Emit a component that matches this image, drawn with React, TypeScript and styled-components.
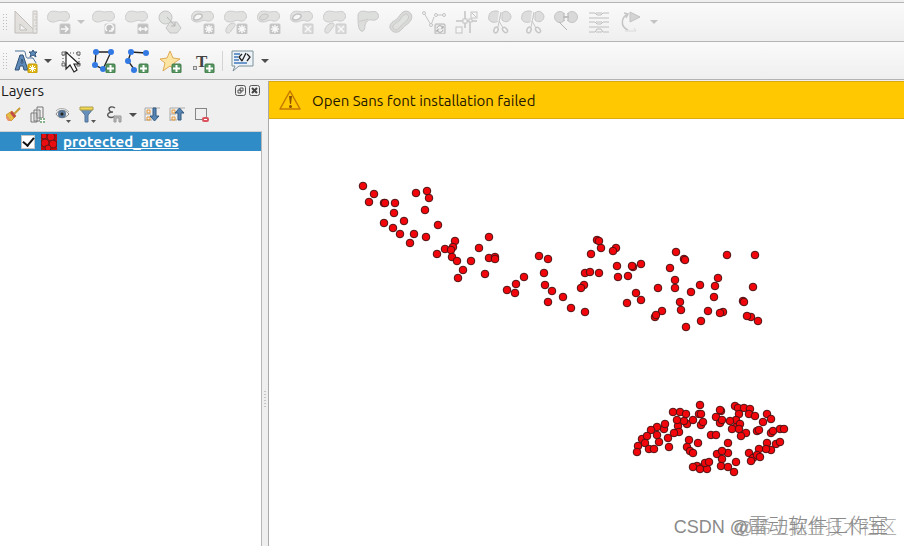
import React, { useState } from "react";
import styled, { createGlobalStyle, css } from "styled-components";

const GlobalStyle = createGlobalStyle`
  * { box-sizing: border-box; }
  body {
    margin: 0;
    background: #efefef;
    color: #1a1a1a;
    font-family: Ubuntu, "Noto Sans", "Open Sans", sans-serif;
    font-size: 15px;
  }
  button { font: inherit; color: inherit; }
`;

const Window = styled.div`
  display: flex;
  flex-direction: column;
  height: 100vh;
  padding-top: 2px;
  overflow: hidden;
`;

const Toolbar = styled.div`
  display: flex;
  align-items: center;
  flex: none;
  height: 39px;
  border-top: 1px solid #b4b4b4;
  background: linear-gradient(#fafafa, #efefef);
  &:nth-of-type(2) { border-bottom: 1px solid #b4b4b4; }
`;

const Handle = styled.span`
  flex: none;
  width: 5px;
  height: 18px;
  margin: 0 2px;
  background: radial-gradient(circle, #bdbdbd 0 0.5px, transparent 1px) 0 0 / 3px 3px;
`;

const ToolButton = styled.button`
  display: flex;
  align-items: center;
  justify-content: center;
  flex: none;
  width: 33px;
  height: 34px;
  padding: 0;
  border: 0;
  background: none;
  &:disabled { opacity: 0.85; }
`;

const Split = styled.div`
  display: flex;
  flex: none;
  align-items: center;
`;

const CaretButton = styled.button<{ $faded?: boolean }>`
  flex: none;
  display: flex;
  justify-content: center;
  width: 12px;
  height: 20px;
  padding: 8px 0 0;
  border: 0;
  background: none;
  &::before {
    content: "";
    border: 4px solid transparent;
    border-bottom: 0;
    border-top-color: ${(p) => (p.$faded ? "#c4c4c4" : "#4d4d4d")};
  }
`;

const Divider = styled.span`
  width: 1px;
  height: 20px;
  margin: 0 3px;
  background: #d4d4d4;
`;

const Workspace = styled.div`
  display: grid;
  grid-template-columns: 262px 6px minmax(0, 1fr);
  flex: 1;
  min-height: 0;
`;

const Panel = styled.aside`
  display: flex;
  flex-direction: column;
  min-height: 0;
`;

const PanelHeader = styled.header`
  display: flex;
  align-items: center;
  height: 22px;
  padding: 0 1px;
  gap: 2px;
`;

const PanelTitle = styled.h2`
  flex: 1;
  margin: 0;
  font-size: 15px;
  line-height: 20px;
  font-weight: 400;
`;

const SmallButton = styled.button`
  display: flex;
  width: 12px;
  height: 12px;
  padding: 0;
  border: 0;
  background: none;
`;

const PanelTools = styled.div`
  display: flex;
  align-items: center;
  height: 29px;
  padding-bottom: 3px;
`;

const PanelTool = styled.button<{ $wide?: boolean }>`
  display: flex;
  align-items: center;
  justify-content: center;
  flex: none;
  width: ${(p) => (p.$wide ? "27px" : "25px")};
  height: 26px;
  padding: 0;
  border: 0;
  background: none;
`;

const Tree = styled.ul`
  flex: 1;
  margin: 0;
  padding: 0;
  list-style: none;
  background: #fff;
  border-right: 1px solid #b6b6b6;
  border-top: 1px solid #d0d0d0;
`;

const LayerRow = styled.li`
  display: flex;
  align-items: center;
  height: 19px;
  padding-left: 21px;
  background: #308cc6;
`;

const LayerLabel = styled.label`
  display: flex;
  align-items: center;
  gap: 6px;
  color: #fff;
  font-size: 15px;
  line-height: 19px;
  font-weight: 700;
  text-decoration: underline;
`;

const checkMark = css`
  &:checked::after {
    content: "";
    width: 5px;
    height: 9px;
    margin-top: -2px;
    border: solid #111;
    border-width: 0 2px 2px 0;
    transform: rotate(40deg);
  }
`;

const Check = styled.input`
  appearance: none;
  display: flex;
  align-items: center;
  justify-content: center;
  width: 14px;
  height: 14px;
  margin: 0;
  border: 1px solid #c4c4c4;
  background: #fff;
  ${checkMark}
`;

const Splitter = styled.div`
  display: flex;
  align-items: flex-start;
  justify-content: center;
  padding-top: 311px;
  background: #efefef;
`;

const Grip = styled.span`
  width: 2px;
  height: 18px;
  background: repeating-linear-gradient(#c4c4c4 0 1px, transparent 1px 3px);
`;

const MapView = styled.main`
  position: relative;
  display: flex;
  flex-direction: column;
  min-width: 0;
  margin-top: 1px;
  border-left: 1px solid #aaa;
  background: #fff;
  overflow: hidden;
`;

const MessageBar = styled.div`
  display: flex;
  align-items: center;
  flex: none;
  gap: 10px;
  height: 38px;
  padding: 0 9px;
  border: 1px solid #dcaa10;
  border-left: 0;
  border-right: 0;
  background: #ffc800;
  color: #1e1600;
`;

const Canvas = styled.svg`
  flex: none;
  display: block;
`;

const Watermark = styled.div<{ $front?: boolean }>`
  position: absolute;
  right: ${(p) => (p.$front ? "16px" : "7px")};
  bottom: ${(p) => (p.$front ? "6px" : "5px")};
  color: ${(p) => (p.$front ? "#8a8a8a" : "#a2a2a2")};
  font-family: "Liberation Sans", "Noto Sans CJK SC", sans-serif;
  font-size: ${(p) => (p.$front ? "20px" : "18px")};
  font-weight: 300;
  line-height: 26px;
  white-space: nowrap;
`;

const Latin = styled.span`
  font-size: 18px;
`;

const Svg = ({ size = 24, children }: { size?: number; children: React.ReactNode }) => (
  <svg width={size} height={size} viewBox={`0 0 ${size} ${size}`} fill="none" aria-hidden="true">
    {children}
  </svg>
);

const BLOB = "M1 5C2 0 8 1 12 2C16 2 20 0 22 4C24 8 20 12 16 11C12 9 10 12 6 12C1 12 -1 8 1 5Z";
const TAIL = "M2 22C1 18 5 13 10 13C13 15 9 18 7 21C6 23 3 24 2 22Z";
const RING = "M3 7C4 4 9 3 11 5C12 8 8 10 5 10C3 10 2 9 3 7Z";

const glyphs: Record<string, React.ReactNode> = {
  arrow: <path d="M14 19H21M18 16L21 19L18 22" />,
  rotate: <path d="M15 21A4 4 0 1 1 20 21M20 18V21H17" />,
  both: <path d="M14 19H22M16 17L14 19L16 21M20 17L22 19L20 21" />,
  star: <path d="M18 15V23M14 19H22M15 16L21 22M21 16L15 22" />,
  cross: <path d="M15 16L21 22M21 16L15 22" />,
};

const GreyBadge = ({ glyph, light }: { glyph: string; light?: boolean }) => (
  <>
    <rect x="13" y="14" width="10" height="10" rx="1" fill={light ? "#d5d5d5" : "#b8b8b8"} stroke="#c5c5c5" />
    <g stroke="#fafafa" strokeWidth="1.5">{glyphs[glyph]}</g>
  </>
);

const Feature = ({ glyph, tail, ring, hollow, light }: {
  glyph: string; tail?: boolean; ring?: boolean; hollow?: boolean; light?: boolean;
}) => (
  <Svg>
    <g fill="#dedfdd" stroke="#c4c4c4">
      <path d={BLOB} />
      {tail && <path d={TAIL} />}
      {ring && <path d={RING} fill={hollow ? "#f8f8f8" : "#d5d7d3"} stroke="#b9b9b9" strokeWidth={hollow ? 1.5 : 1} />}
    </g>
    <GreyBadge glyph={glyph} light={light} />
  </Svg>
);

const Scissors = () => (
  <Svg>
    <g stroke="#bfbfbf">
      <path d="M1 6C1 2 5 1 8 1C12 1 13 4 12 8C11 12 7 13 4 12C1 11 0 9 1 6Z" fill="#d9d9d9" />
      <path d="M14 3C18 -1 23 3 23 7C22 12 17 13 14 10Z" fill="#d9d9d9" />
      <path d="M12 1L10 17M12 11L15 18" stroke="#f5f5f5" strokeWidth="2" />
      <path d="M13 2L10 17M11 11L15 18" />
      <ellipse cx="8" cy="20" rx="2" ry="3" transform="rotate(20 8 20)" strokeWidth="1.5" />
      <ellipse cx="17" cy="20" rx="2" ry="3" transform="rotate(-40 17 20)" strokeWidth="1.5" />
    </g>
  </Svg>
);

const advancedTools: { name: string; icon: React.ReactNode; menu?: boolean }[] = [
  {
    name: "Enable advanced digitizing tools",
    icon: (
      <Svg>
        <path d="M1 1V23H23ZM6 14L13 20H6Z" fill="#e0ddd9" stroke="#b9b5b1" fillRule="evenodd" />
        <path d="M19 1H23V23H19Z" fill="#e8e6e3" stroke="#c0bdba" />
        <path d="M20 4H23M21 7H23M20 10H23M21 13H23M20 16H23M21 19H23" stroke="#c0bdba" />
      </Svg>
    ),
  },
  { name: "Move feature", icon: <Feature glyph="arrow" />, menu: true },
  { name: "Rotate feature", icon: <Feature glyph="rotate" /> },
  { name: "Scale feature", icon: <Feature glyph="both" /> },
  {
    name: "Simplify feature",
    icon: (
      <Svg>
        <g stroke="#bdbdbd" fill="#dcdedb">
          <circle cx="7.5" cy="7.5" r="6.5" />
          <path d="M12 12H19L23 18L19 23H12L8 18Z" />
          <path d="M9 7L17 16M17 12V16H13" stroke="#aaa" />
        </g>
      </Svg>
    ),
  },
  { name: "Add ring", icon: <Feature glyph="star" ring hollow /> },
  { name: "Add part", icon: <Feature glyph="star" tail /> },
  { name: "Fill ring", icon: <Feature glyph="star" ring /> },
  { name: "Delete ring", icon: <Feature glyph="cross" ring hollow light /> },
  { name: "Delete part", icon: <Feature glyph="cross" tail light /> },
  {
    name: "Reshape features",
    icon: (
      <Svg>
        <path d="M2 5C3 0 8 1 12 2C16 2 20 0 22 4C24 8 20 11 16 10C12 9 10 12 9 15C9 19 8 22 5 21C2 19 2 12 2 5Z" fill="#d9dbd8" stroke="#c0c0c0" />
        <path d="M3 12C5 10 9 11 12 9" stroke="#c4c4c4" />
      </Svg>
    ),
  },
  {
    name: "Offset curve",
    icon: (
      <Svg>
        <path d="M14 2C19 -1 25 4 22 10C20 14 16 15 13 19C9 24 3 23 1 18C0 13 5 11 8 9C10 7 11 4 14 2Z" fill="#d4d6d3" stroke="#c0c0c0" />
        <path d="M15 5C18 3 21 6 19 9C17 12 14 13 11 17C8 21 4 20 4 17C4 14 8 13 11 10C12 8 13 6 15 5Z" fill="#dddfdc" stroke="#c4c4c4" />
      </Svg>
    ),
  },
  {
    name: "Reverse line",
    icon: (
      <Svg>
        <g stroke="#bcbcbc" fill="#f7f7f7">
          <path d="M2 3L9 15L12 7" />
          <path d="M13 5H22" />
          <circle cx="2" cy="3" r="1.5" /><circle cx="9" cy="15" r="1.5" />
          <circle cx="14" cy="5" r="1.5" /><circle cx="22" cy="5" r="1.5" />
          <rect x="13" y="14" width="10" height="10" rx="1" fill="#e5e5e5" stroke="#aaa" />
          <path d="M15 18C16 15 20 15 21 18M21 20C20 23 16 23 15 20M21 16V18H19M15 22V20H17" stroke="#999" />
        </g>
      </Svg>
    ),
  },
  {
    name: "Trim or extend feature",
    icon: (
      <Svg>
        <g stroke="#bcbcbc" fill="#f7f7f7">
          <path d="M1 11H22M10 1V18M15 11V23" strokeWidth="1.5" />
          <rect x="16" y="2" width="6" height="6" /><rect x="1" y="17" width="6" height="6" />
          <path d="M17 3L21 7" />
          <rect x="8" y="9" width="4" height="4" /><rect x="14" y="9" width="3" height="3" />
        </g>
      </Svg>
    ),
  },
  { name: "Split features", icon: <Scissors /> },
  { name: "Split parts", icon: <Scissors /> },
  {
    name: "Merge features",
    icon: (
      <Svg>
        <g stroke="#bdbdbd" fill="#d4d4d4">
          <circle cx="6" cy="7" r="5.5" /><circle cx="18" cy="7" r="5.5" />
          <path d="M10 5H14M10 9H14" stroke="#f4f4f4" strokeWidth="2" />
          <path d="M10 3V11M14 3V11M9 7H15" stroke="#aaa" />
          <path d="M5 12L13 20" stroke="#aaa" />
        </g>
      </Svg>
    ),
  },
  {
    name: "Merge attributes",
    icon: (
      <Svg>
        <path d="M2 3H8L10 5H14L16 3H22M2 8H22M2 12H8L10 14H14L16 12H22M2 17H22M2 22H8L10 19H14L16 22H22M9 3H15M9 12H15M9 22H15" stroke="#b6b6b6" />
      </Svg>
    ),
  },
  {
    name: "Rotate point symbols",
    icon: (
      <Svg>
        <path d="M10 2L20 7L10 12Z" fill="#cfcfcf" stroke="#b9b9b9" />
        <path d="M8 20C0 17 1 7 8 4M4 3L8 4L6 8" stroke="#bdbdbd" strokeWidth="1.5" />
        <path d="M5 21H16L14 18" stroke="#d7d7d7" />
      </Svg>
    ),
    menu: true,
  },
];

const PlusBadge = () => (
  <>
    <rect x="14" y="15" width="9" height="9" rx="1" fill="#579561" stroke="#407b4a" />
    <path d="M18.5 16V23M15 19.5H22" stroke="#fff" strokeWidth="2" />
  </>
);

const annotationTools: { name: string; icon: React.ReactNode; menu?: boolean }[] = [
  {
    name: "New annotation layer",
    menu: true,
    icon: (
      <Svg>
        <path d="M1 2H10C12 2 11 8 13 9H19L22 14" stroke="#4d7197" />
        <path d="M19 1L20 3H23L21 5L22 8L19 6L16 8L17 5L15 3H18Z" fill="#5d8cbb" stroke="#34577d" />
        <path d="M1 21L6 6H9L14 21H10L9 17H6L5 21ZM7 14H9L8 10Z" fill="#5d88b8" stroke="#315477" fillRule="evenodd" />
        <rect x="14" y="15" width="9" height="9" rx="1" fill="#e2b912" stroke="#bd960b" />
        <path d="M18.5 16V23M15 19.5H22M16 17L21 22M21 17L16 22" stroke="#fff" />
      </Svg>
    ),
  },
  {
    name: "Modify annotations",
    icon: (
      <Svg>
        <path d="M5 4H19M4 6V15M20 6V15M6 16H18" stroke="#444" strokeDasharray="1 2" />
        <g fill="#eee" stroke="#666"><path d="M3 3H6V6H3ZM18 3H21V6H18ZM3 14H6V17H3ZM18 14H21V17H18Z" /></g>
        <path d="M7 3V20L11 16L15 23L18 21L15 15H20Z" fill="#fff" stroke="#222" strokeWidth="1.2" />
      </Svg>
    ),
  },
  {
    name: "Create polygon annotation",
    icon: (
      <Svg>
        <path d="M4 3H19L11 20L3 16Z" fill="#f4f4f4" stroke="#222" strokeWidth="1.3" />
        <g fill="#3379e4"><circle cx="4" cy="3" r="3" /><circle cx="19" cy="3" r="3" /><circle cx="3" cy="16" r="3" /><circle cx="11" cy="20" r="3" /></g>
        <PlusBadge />
      </Svg>
    ),
  },
  {
    name: "Create line annotation",
    icon: (
      <Svg>
        <path d="M21 4L6 3L3 12L9 20" stroke="#222" strokeWidth="1.3" />
        <g fill="#3379e4"><circle cx="21" cy="4" r="3" /><circle cx="6" cy="3" r="3" /><circle cx="3" cy="12" r="3" /><circle cx="9" cy="21" r="3" /></g>
        <PlusBadge />
      </Svg>
    ),
  },
  {
    name: "Create marker annotation",
    icon: (
      <Svg>
        <path d="M12 2L15 9L22 10L16 14L18 22L12 17L5 22L7 14L2 10L9 9Z" fill="#fce4a2" stroke="#dfaa55" />
        <PlusBadge />
      </Svg>
    ),
  },
  {
    name: "Create text annotation at point",
    icon: (
      <Svg>
        <text x="5" y="18" fontFamily="Liberation Serif, serif" fontWeight="700" fontSize="17" fill="#444">T</text>
        <rect x="2.5" y="17.5" width="3" height="3" fill="#ddd" stroke="#888" />
        <PlusBadge />
      </Svg>
    ),
  },
];

const HtmlNote = () => (
  <Svg>
    <path d="M1 2H22V17H8L2 22L4 17H1Z" fill="#edf3f7" stroke="#7d929c" />
    <path d="M3 5H9M3 8H7M3 11H8M3 14H16" stroke="#6b97cb" strokeWidth="2" />
    <path d="M11 5L8 8L11 12M16 5L19 8L16 12M15 4L11 12" stroke="#222" strokeWidth="1.3" />
  </Svg>
);

const panelTools: { name: string; icon: React.ReactNode; menu?: boolean }[] = [
  {
    name: "Open the layer styling panel",
    icon: (
      <Svg size={18}>
        <path d="M16 2L10 8" stroke="#c79b32" strokeWidth="2" />
        <path d="M8 5L12 10L7 15L2 9Z" fill="#e6bf42" stroke="#c99c37" />
        <path d="M8 5L12 10L10 12L6 7Z" fill="#c14b49" />
        <path d="M2 9L7 15H4L2 12Z" fill="#e9926b" />
      </Svg>
    ),
  },
  {
    name: "Add group",
    icon: (
      <Svg size={18}>
        <path d="M8 1H14V12H8ZM5 4H11V15H5ZM2 7H8V16H2Z" stroke="#777" />
        <path d="M9 3V12M6 6V14" stroke="#bbb" />
        <rect x="11" y="12" width="5" height="5" fill="#87b48c" /><path d="M13.5 12V17M11 14.5H16" stroke="#fff" />
      </Svg>
    ),
  },
  {
    name: "Manage map themes",
    icon: (
      <Svg size={18}>
        <path d="M2 8C5 3 11 3 15 8C11 13 5 13 2 8Z" fill="#eee" stroke="#888" />
        <circle cx="8" cy="8" r="4" fill="#5a7797" /><circle cx="8" cy="8" r="1.5" fill="#222" />
        <path d="M2 5C5 1 12 2 15 6" stroke="#aaa" />
        <path d="M12 14H17L14.5 17Z" fill="#555" />
      </Svg>
    ),
  },
  {
    name: "Filter legend",
    icon: (
      <Svg size={18}>
        <path d="M1 3H14L9 9V16H6V9Z" fill="#668fbb" stroke="#517499" />
        <path d="M1 1H14V4H1Z" fill="#f2d84e" stroke="#ad9d4f" />
        <path d="M12 14H17L14.5 17Z" fill="#555" />
      </Svg>
    ),
  },
  {
    name: "Filter legend by expression",
    menu: true,
    icon: (
      <Svg size={18}>
        <path d="M10 2C7 0 4 1 4 3C4 5 6 6 8 6C4 6 2 8 3 10C4 12 8 12 10 10" stroke="#555" strokeWidth="1.4" />
        <path d="M9 10H16V16H14V12H11V16H9Z" fill="#b9b9b9" stroke="#999" />
      </Svg>
    ),
  },
  {
    name: "Expand all",
    icon: (
      <Svg size={18}>
        <path d="M2 2H17M2 2V15M2 8H8M2 14H9" stroke="#aaa" />
        <path d="M4 4H7V7H4ZM4 11H7V14H4Z" stroke="#e79a37" />
        <path d="M10 2H13V10H16L11.5 15L7 10H10Z" fill="#5685b4" stroke="#335b82" />
      </Svg>
    ),
  },
  {
    name: "Collapse all",
    icon: (
      <Svg size={18}>
        <path d="M2 2H17M2 2V15M2 8H8M2 14H9" stroke="#aaa" />
        <path d="M4 4H7V7H4ZM4 11H7V14H4Z" stroke="#e79a37" />
        <path d="M10 14H13V7H16L11.5 2L7 7H10Z" fill="#5685b4" stroke="#335b82" />
      </Svg>
    ),
  },
  {
    name: "Remove layer",
    icon: (
      <Svg size={18}>
        <rect x="2.5" y="2.5" width="11" height="11" stroke="#858585" />
        <rect x="10" y="12" width="5" height="3" rx="1" fill="#fff" stroke="#dc5360" strokeWidth="2" />
      </Svg>
    ),
  },
];

const points: [number, number][] = [
  [363, 186], [374, 194], [369, 202], [384, 203], [385, 203], [395, 203], [394, 213], [404, 221], [384, 223],
  [393, 228], [400, 234], [414, 234], [410, 243], [426, 237], [438, 225], [425, 210], [429, 198], [427, 191],
  [416, 193], [437, 254], [445, 249], [455, 241], [453, 247], [451, 250], [452, 257], [457, 261], [471, 261],
  [463, 270], [458, 278], [479, 248], [489, 237], [489, 258], [495, 257], [495, 259], [485, 274],
  [539, 256], [548, 259], [544, 273], [524, 277], [516, 284], [507, 290], [515, 293], [545, 285], [552, 291],
  [548, 302], [563, 297], [571, 308], [585, 312], [584, 285], [581, 288], [585, 273], [590, 272], [599, 273],
  [591, 254], [597, 240], [599, 241], [601, 248], [616, 248], [613, 251], [617, 266], [618, 277], [628, 276],
  [633, 267], [632, 266], [641, 264], [636, 293], [627, 303], [641, 300],
  [676, 252], [684, 259], [685, 260], [670, 268], [675, 280], [675, 288], [658, 288], [691, 292], [700, 285],
  [680, 302], [681, 310], [662, 311], [655, 317], [656, 315], [686, 327], [701, 321], [708, 311], [714, 297],
  [715, 286], [718, 278], [727, 255], [755, 255], [753, 287], [743, 301], [744, 302], [723, 312], [720, 313],
  [751, 317], [747, 316], [758, 321],
  [700, 405], [673, 412], [680, 412], [686, 414], [687, 424], [684, 421], [678, 426], [677, 420], [693, 420],
  [679, 432], [674, 433], [699, 414], [701, 414], [701, 425], [703, 422], [664, 429], [665, 424], [657, 427],
  [651, 430], [642, 439], [647, 436], [657, 435], [645, 443], [638, 446], [637, 452], [649, 449], [654, 449],
  [659, 442], [668, 438], [669, 447], [721, 411], [720, 410], [716, 417], [720, 423], [722, 420], [735, 406],
  [738, 408], [744, 408], [750, 409], [739, 414], [749, 414], [755, 416], [736, 420], [730, 421], [736, 427],
  [740, 424], [732, 429], [739, 429], [746, 433], [741, 436], [767, 414], [771, 419], [763, 422], [757, 431],
  [759, 430], [771, 433], [773, 431], [780, 429], [784, 429], [711, 435], [716, 435], [689, 440], [698, 443],
  [687, 447], [690, 451], [693, 453], [728, 443], [717, 454], [728, 453], [722, 451], [722, 459], [721, 466],
  [728, 467], [734, 472], [736, 462], [697, 466], [693, 467], [703, 467], [700, 469], [707, 469], [705, 463],
  [709, 462], [776, 444], [767, 443], [771, 450], [766, 449], [759, 449], [780, 442], [749, 453], [753, 458],
  [751, 461], [757, 455], [760, 457],
];

const toolSets = (tools: typeof advancedTools, faded?: boolean) =>
  tools.map((tool) =>
    tool.menu ? (
      <Split key={tool.name}>
        <ToolButton aria-label={tool.name} disabled={faded}>{tool.icon}</ToolButton>
        <CaretButton $faded={faded} disabled={faded} aria-label={`${tool.name} options`} />
      </Split>
    ) : (
      <ToolButton key={tool.name} aria-label={tool.name} disabled={faded}>{tool.icon}</ToolButton>
    ),
  );

export default function App() {
  const [visible, setVisible] = useState(true);
  return (
    <>
      <GlobalStyle />
      <Window>
        <Toolbar role="toolbar" aria-label="Advanced digitizing">
          <Handle />
          {toolSets(advancedTools, true)}
        </Toolbar>
        <Toolbar role="toolbar" aria-label="Annotations">
          <Handle />
          {toolSets(annotationTools)}
          <Divider />
          <ToolButton aria-label="HTML annotation"><HtmlNote /></ToolButton>
          <CaretButton aria-label="HTML annotation options" />
        </Toolbar>
        <Workspace>
          <Panel>
            <PanelHeader>
              <PanelTitle>Layers</PanelTitle>
              <SmallButton aria-label="Float panel">
                <Svg size={12}>
                  <rect x="0.5" y="0.5" width="10" height="10" rx="2" stroke="#555" />
                  <path d="M5 3H8V6H5ZM3 5H6V8H3Z" stroke="#555" />
                </Svg>
              </SmallButton>
              <SmallButton aria-label="Close panel">
                <Svg size={12}>
                  <rect x="0.5" y="0.5" width="10" height="10" rx="2" stroke="#555" />
                  <path d="M3 3L8 8M8 3L3 8" stroke="#444" strokeWidth="2" />
                </Svg>
              </SmallButton>
            </PanelHeader>
            <PanelTools role="toolbar" aria-label="Layer tools">
              {panelTools.map((tool) =>
                tool.menu ? (
                  <Split key={tool.name}>
                    <PanelTool $wide aria-label={tool.name}>{tool.icon}</PanelTool>
                    <CaretButton aria-label={`${tool.name} options`} />
                  </Split>
                ) : (
                  <PanelTool key={tool.name} aria-label={tool.name}>{tool.icon}</PanelTool>
                ),
              )}
            </PanelTools>
            <Tree>
              <LayerRow>
                <LayerLabel>
                  <Check type="checkbox" checked={visible} onChange={() => setVisible(!visible)} />
                  <Svg size={16}>
                    <rect width="16" height="16" fill="#c4090d" />
                    <g fill="#e90c10" stroke="#65171a">
                      <circle cx="3" cy="2" r="3" /><circle cx="10" cy="3" r="4" /><circle cx="4" cy="9" r="4" />
                      <circle cx="12" cy="10" r="4" /><circle cx="7" cy="14" r="3" />
                    </g>
                  </Svg>
                  protected_areas
                </LayerLabel>
              </LayerRow>
            </Tree>
          </Panel>
          <Splitter><Grip /></Splitter>
          <MapView>
            <MessageBar role="alert">
              <Svg>
                <path d="M12 3L22 21H2Z" stroke="#c77800" strokeWidth="1.5" strokeLinejoin="round" />
                <path d="M11 8H14L13 16H12Z" fill="#8e5300" /><circle cx="12.5" cy="18.5" r="1.5" fill="#8e5300" />
              </Svg>
              Open Sans font installation failed
            </MessageBar>
            {visible && (
              <Canvas width="635" height="427" viewBox="269 119 635 427" role="img" aria-label="protected_areas">
                <g fill="#f3060b" stroke="#4a1213">
                  {points.map(([x, y], i) => <circle key={i} cx={x} cy={y} r="3.8" />)}
                </g>
              </Canvas>
            )}
            <Watermark>@稀土掘金技术社区</Watermark>
            <Watermark $front><Latin>CSDN @</Latin>雷动软件工作室</Watermark>
          </MapView>
        </Workspace>
      </Window>
    </>
  );
}
